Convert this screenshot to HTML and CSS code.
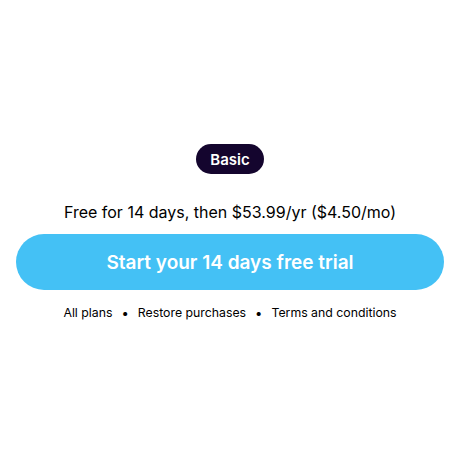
FILE: index.html
```html
<!DOCTYPE html>
<html>
<head>
<meta charset="utf-8">
<link rel="stylesheet" href="styles.css">
</head>
<body>
<main class="paywall">
  <span class="badge">Basic</span>
  <p class="price">Free for 14 days, then $53.99/yr ($4.50/mo)</p>
  <button class="cta">Start your 14 days free trial</button>
  <nav class="links">
    <span>All plans</span><span class="dot">•</span><span>Restore purchases</span><span class="dot">•</span><span>Terms and conditions</span>
  </nav>
</main>
</body>
</html>
```

FILE: styles.css
```css
html, body {
  margin: 0;
  padding: 0;
  background: #fff;
}
body {
  width: 460px;
  height: 460px;
  font-family: Inter, "Noto Sans", sans-serif;
  color: #000;
}
.paywall {
  display: flex;
  flex-direction: column;
  align-items: center;
  padding: 144px 16px 0;
}
.badge {
  display: inline-flex;
  align-items: center;
  justify-content: center;
  height: 30px;
  padding: 0 14px;
  border-radius: 15px;
  background: #14052e;
  color: #fff;
  font-size: 15px;
  font-weight: 600;
}
.price {
  margin: 28px 0 0;
  font-size: 16px;
  line-height: 20px;
}
.cta {
  margin-top: 12px;
  width: 428px;
  height: 56px;
  border: 0;
  border-radius: 28px;
  background: #44c1f5;
  color: #fff;
  font-family: inherit;
  font-size: 19px;
  font-weight: 600;
}
.links {
  margin-top: 15px;
  display: flex;
  gap: 9px;
  font-size: 12.3px;
  line-height: 16px;
}
.dot {
  font-size: 13px;
}
```
